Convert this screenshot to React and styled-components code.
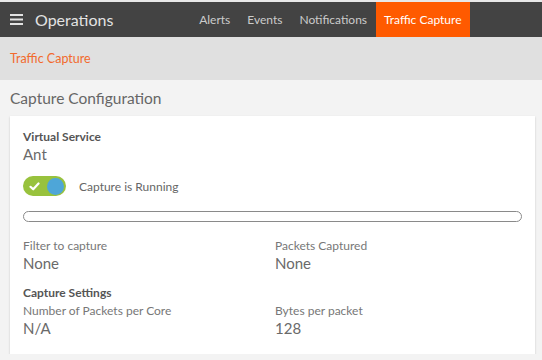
import styled, { createGlobalStyle } from 'styled-components'

const GlobalStyle = createGlobalStyle`
    body {
        margin: 0;
        background: #f3f3f3;
        font-family: Lato, "Open Sans", sans-serif;
    }
`

const NavBar = styled.nav`
    display: flex;
    align-items: stretch;
    height: 35px;
    border-top: 2px solid #e8e8e8;
    background: #434343;
    padding-right: 72px;
`

const Brand = styled.div`
    display: flex;
    align-items: center;
    gap: 12px;
    padding-left: 10px;
    color: #e2e2e2;
    font-size: 16px;
`

const Tabs = styled.div`
    display: flex;
    margin-left: auto;
`

const Tab = styled.div`
    display: flex;
    align-items: center;
    padding: 0 8.5px;
    font-size: 12px;
    color: ${p => p.$active ? '#fff' : '#cbcbcb'};
    background: ${p => p.$active ? '#ff5a00' : 'transparent'};
`

const Breadcrumb = styled.div`
    display: flex;
    align-items: center;
    height: 43px;
    padding-left: 10px;
    background: #e0e0e0;
    color: #f26a2d;
    font-size: 12.5px;
`

const Main = styled.main`
    padding: 0 7px 0 10px;
`

const Title = styled.h2`
    display: flex;
    align-items: center;
    height: 36px;
    margin: 0;
    color: #666;
    font-size: 15.5px;
    font-weight: normal;
`

const Card = styled.section`
    background: #fff;
    box-shadow: 0 1px 2px rgba(0, 0, 0, 0.18);
    padding: 13px 13px 17px;
`

const Heading = styled.div`
    font-size: 12px;
    line-height: 16px;
    font-weight: bold;
    color: #555;
    margin-top: ${p => p.$gap || 0}px;
`

const Label = styled.div`
    font-size: 12px;
    line-height: 16px;
    color: #777;
`

const Value = styled.div`
    font-size: 15px;
    line-height: 18px;
    color: #6a6a6a;
`

const ToggleRow = styled.div`
    display: flex;
    align-items: center;
    gap: 13px;
    margin-top: 13px;
    font-size: 12px;
    color: #666;
`

const Toggle = styled.div`
    display: flex;
    align-items: center;
    justify-content: space-between;
    width: 43px;
    height: 20px;
    box-sizing: border-box;
    padding: 0 2px 0 6px;
    border-radius: 10px;
    background: #98c23d;
`

const Knob = styled.span`
    width: 17px;
    height: 17px;
    border-radius: 50%;
    background: #4ea6d8;
`

const Progress = styled.div`
    height: 9px;
    margin-top: 15px;
    border: 1px solid #8a8a8a;
    border-radius: 6px;
`

const Fields = styled.div`
    display: grid;
    grid-template-columns: 252px 1fr;
    margin-top: ${p => p.$gap}px;
`

const Field = styled.div`
    display: flex;
    flex-direction: column;
`

const Hamburger = () => (
    <svg width="13" height="11" viewBox="0 0 13 11">
        <rect x="0" y="0" width="13" height="2" fill="#e2e2e2" />
        <rect x="0" y="4.5" width="13" height="2" fill="#e2e2e2" />
        <rect x="0" y="9" width="13" height="2" fill="#e2e2e2" />
    </svg>
)

const App = () => {
    const tabs = ['Alerts', 'Events', 'Notifications', 'Traffic Capture']

    return (
        <>
            <GlobalStyle />
            <NavBar>
                <Brand>
                    <Hamburger />
                    Operations
                </Brand>
                <Tabs>
                    {tabs.map(t => (
                        <Tab key={t} $active={t === 'Traffic Capture'}>{t}</Tab>
                    ))}
                </Tabs>
            </NavBar>
            <Breadcrumb>Traffic Capture</Breadcrumb>
            <Main>
                <Title>Capture Configuration</Title>
                <Card>
                    <Heading>Virtual Service</Heading>
                    <Value>Ant</Value>
                    <ToggleRow>
                        <Toggle>
                            <svg width="11" height="9" viewBox="0 0 11 9">
                                <path d="M1.5 4.8L4.2 7.3L9.5 1.5" fill="none" stroke="#fff" strokeWidth="2.2" strokeLinecap="round" strokeLinejoin="round" />
                            </svg>
                            <Knob />
                        </Toggle>
                        Capture is Running
                    </ToggleRow>
                    <Progress />
                    <Fields $gap={16}>
                        <Field>
                            <Label>Filter to capture</Label>
                            <Value>None</Value>
                        </Field>
                        <Field>
                            <Label>Packets Captured</Label>
                            <Value>None</Value>
                        </Field>
                    </Fields>
                    <Heading $gap={13}>Capture Settings</Heading>
                    <Fields $gap={2}>
                        <Field>
                            <Label>Number of Packets per Core</Label>
                            <Value>N/A</Value>
                        </Field>
                        <Field>
                            <Label>Bytes per packet</Label>
                            <Value>128</Value>
                        </Field>
                    </Fields>
                </Card>
            </Main>
        </>
    )
}

export default App
